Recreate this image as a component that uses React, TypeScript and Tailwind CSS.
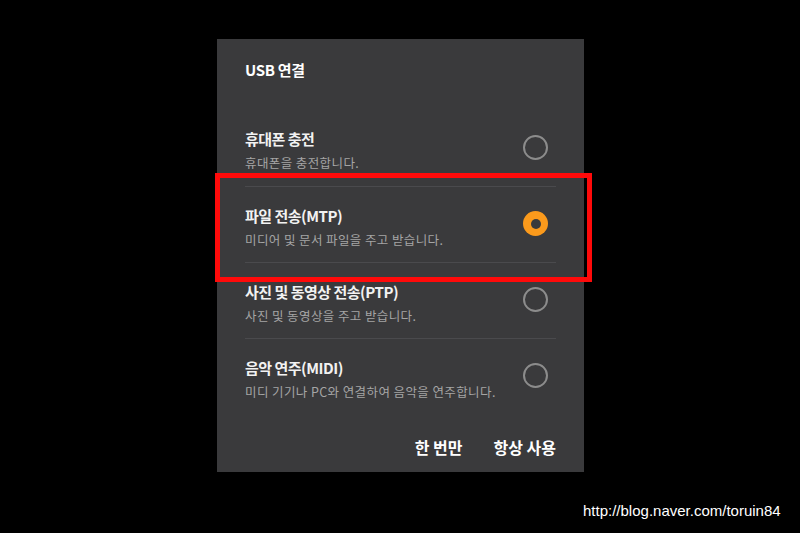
import React from "react";

const items = [
  { title: "휴대폰 충전", sub: "휴대폰을 충전합니다.", selected: false },
  { title: "파일 전송(MTP)", sub: "미디어 및 문서 파일을 주고 받습니다.", selected: true },
  { title: "사진 및 동영상 전송(PTP)", sub: "사진 및 동영상을 주고 받습니다.", selected: false },
  { title: "음악 연주(MIDI)", sub: "미디 기기나 PC와 연결하여 음악을 연주합니다.", selected: false },
];

function Radio({ selected }: { selected: boolean }) {
  if (selected) {
    return (
      <div className="w-[25px] h-[25px] rounded-full bg-[#fb9a1c] flex items-center justify-center">
        <div className="w-[10px] h-[10px] rounded-full bg-[#3a3a3c]" />
      </div>
    );
  }
  return <div className="w-[25px] h-[25px] rounded-full border-2 border-[#8c8c8c]" />;
}

export default function App() {
  return (
    <div
      className="relative w-[800px] h-[533px] bg-black overflow-hidden"
      style={{ fontFamily: '"Noto Sans CJK KR", "Noto Sans", sans-serif' }}
    >
      <div className="flex pt-[39px] pl-[217px]">
        <div className="w-[367px] h-[433px] bg-[#3a3a3c] flex flex-col">
          <div className="pt-[20px] pl-[28px] h-[71px]">
            <div className="h-[22px] leading-[22px] text-[15px] font-bold text-white tracking-[-0.3px]">
              USB 연결
            </div>
          </div>
          <div className="px-[28px] flex flex-col">
            {items.map((it, i) => (
              <div
                key={i}
                className={`h-[76px] flex items-center justify-between ${i > 0 ? "border-t border-[#4a4a4d]" : ""}`}
              >
                <div className="pt-[5px]">
                  <div className="h-[20px] leading-[20px] text-[15px] font-bold text-[#f2f2f2] tracking-[-0.5px]">
                    {it.title}
                  </div>
                  <div className="mt-[5px] h-[18px] leading-[18px] text-[12.5px] text-[#a5a5a5] tracking-[0.4px]">
                    {it.sub}
                  </div>
                </div>
                <div className="mr-[8px] -mt-[2px]">
                  <Radio selected={it.selected} />
                </div>
              </div>
            ))}
          </div>
          <div className="mt-[18px] h-[30px] flex items-center justify-end gap-[31px] pr-[28px] text-[16px] font-bold text-white">
            <span>한 번만</span>
            <span>항상 사용</span>
          </div>
        </div>
      </div>

      <div className="absolute left-[215px] top-[173px] w-[377px] h-[109px] border-[5px] border-[#ff0a0a]" />

      <div
        className="absolute left-[583px] top-[502px] text-[15px] leading-[18px] text-white"
        style={{ fontFamily: '"Liberation Sans", Arial, sans-serif' }}
      >
        http://blog.naver.com/toruin84
      </div>
    </div>
  );
}
